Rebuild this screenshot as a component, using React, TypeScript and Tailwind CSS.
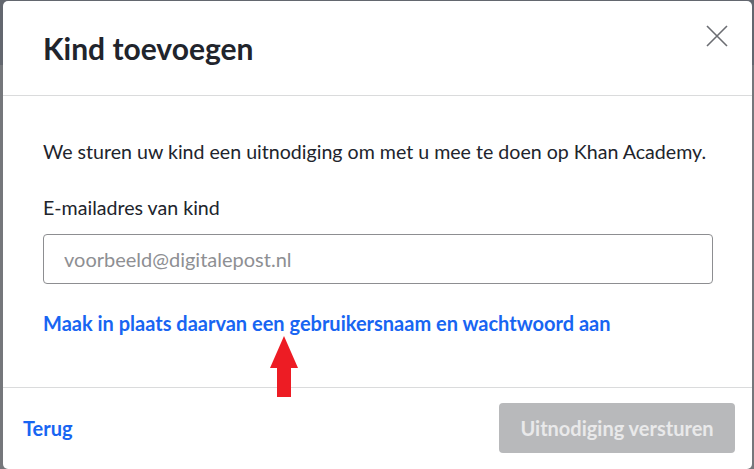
import React from "react";

const font = { fontFamily: 'Lato, "Noto Sans", sans-serif' };

function CloseIcon() {
  return (
    <svg width="22" height="22" viewBox="0 0 22 22" fill="none" stroke="#6b6d72" strokeWidth="1.6">
      <path d="M1 1 L21 21 M21 1 L1 21" />
    </svg>
  );
}

export default function App() {
  return (
    <div
      className="relative h-[469px] w-[754px] overflow-hidden bg-[linear-gradient(#63676f_0_65px,#75777b_65px)] pl-[3px] pr-[2px] pt-[1px]"
      style={font}
    >
      <div className="flex h-[468px] flex-col rounded-[5px] bg-white text-[#21242c]">
        <header className="flex h-[95px] shrink-0 items-center justify-between border-b border-[#dadbdc] pl-[40px] pr-[24px]">
          <h1 className="text-[30px] font-bold leading-none">Kind toevoegen</h1>
          <button type="button" className="-mt-[24px]">
            <CloseIcon />
          </button>
        </header>

        <div className="flex flex-1 flex-col px-[40px] pt-[44px]">
          <p className="whitespace-nowrap text-[19.6px] leading-[24px]">
            We sturen uw kind een uitnodiging om met u mee te doen op Khan Academy.
          </p>
          <label className="mt-[32px] text-[19.6px] leading-[24px]">E-mailadres van kind</label>
          <input
            type="email"
            placeholder="voorbeeld@digitalepost.nl"
            className="mt-[14px] h-[50px] w-[670px] rounded-[4px] border border-[#8d8e91] px-[20px] text-[20px] placeholder:text-[#8e8f93] outline-none"
            style={font}
          />
          <a href="#" className="mt-[27px] whitespace-nowrap text-[20px] font-bold leading-[24px] text-[#1865f2]">
            Maak in plaats daarvan een gebruikersnaam en wachtwoord aan
          </a>
        </div>

        <footer className="flex h-[82px] shrink-0 items-center justify-between border-t border-[#dadbdc] pb-[2px] pl-[20px] pr-[17px]">
          <a href="#" className="text-[20px] font-bold text-[#1865f2]">
            Terug
          </a>
          <button
            type="button"
            disabled
            className="h-[50px] w-[236px] rounded-[4px] bg-[#b8b9bb] text-[20px] font-bold text-[#e9e9ea]"
          >
            Uitnodiging versturen
          </button>
        </footer>
      </div>

      <svg className="absolute left-[270px] top-[336px]" width="29" height="62" viewBox="0 0 29 62">
        <polygon points="14,0 28,32 21,32 21,61 7,61 7,32 0,32" fill="#ed1c24" />
      </svg>
    </div>
  );
}
